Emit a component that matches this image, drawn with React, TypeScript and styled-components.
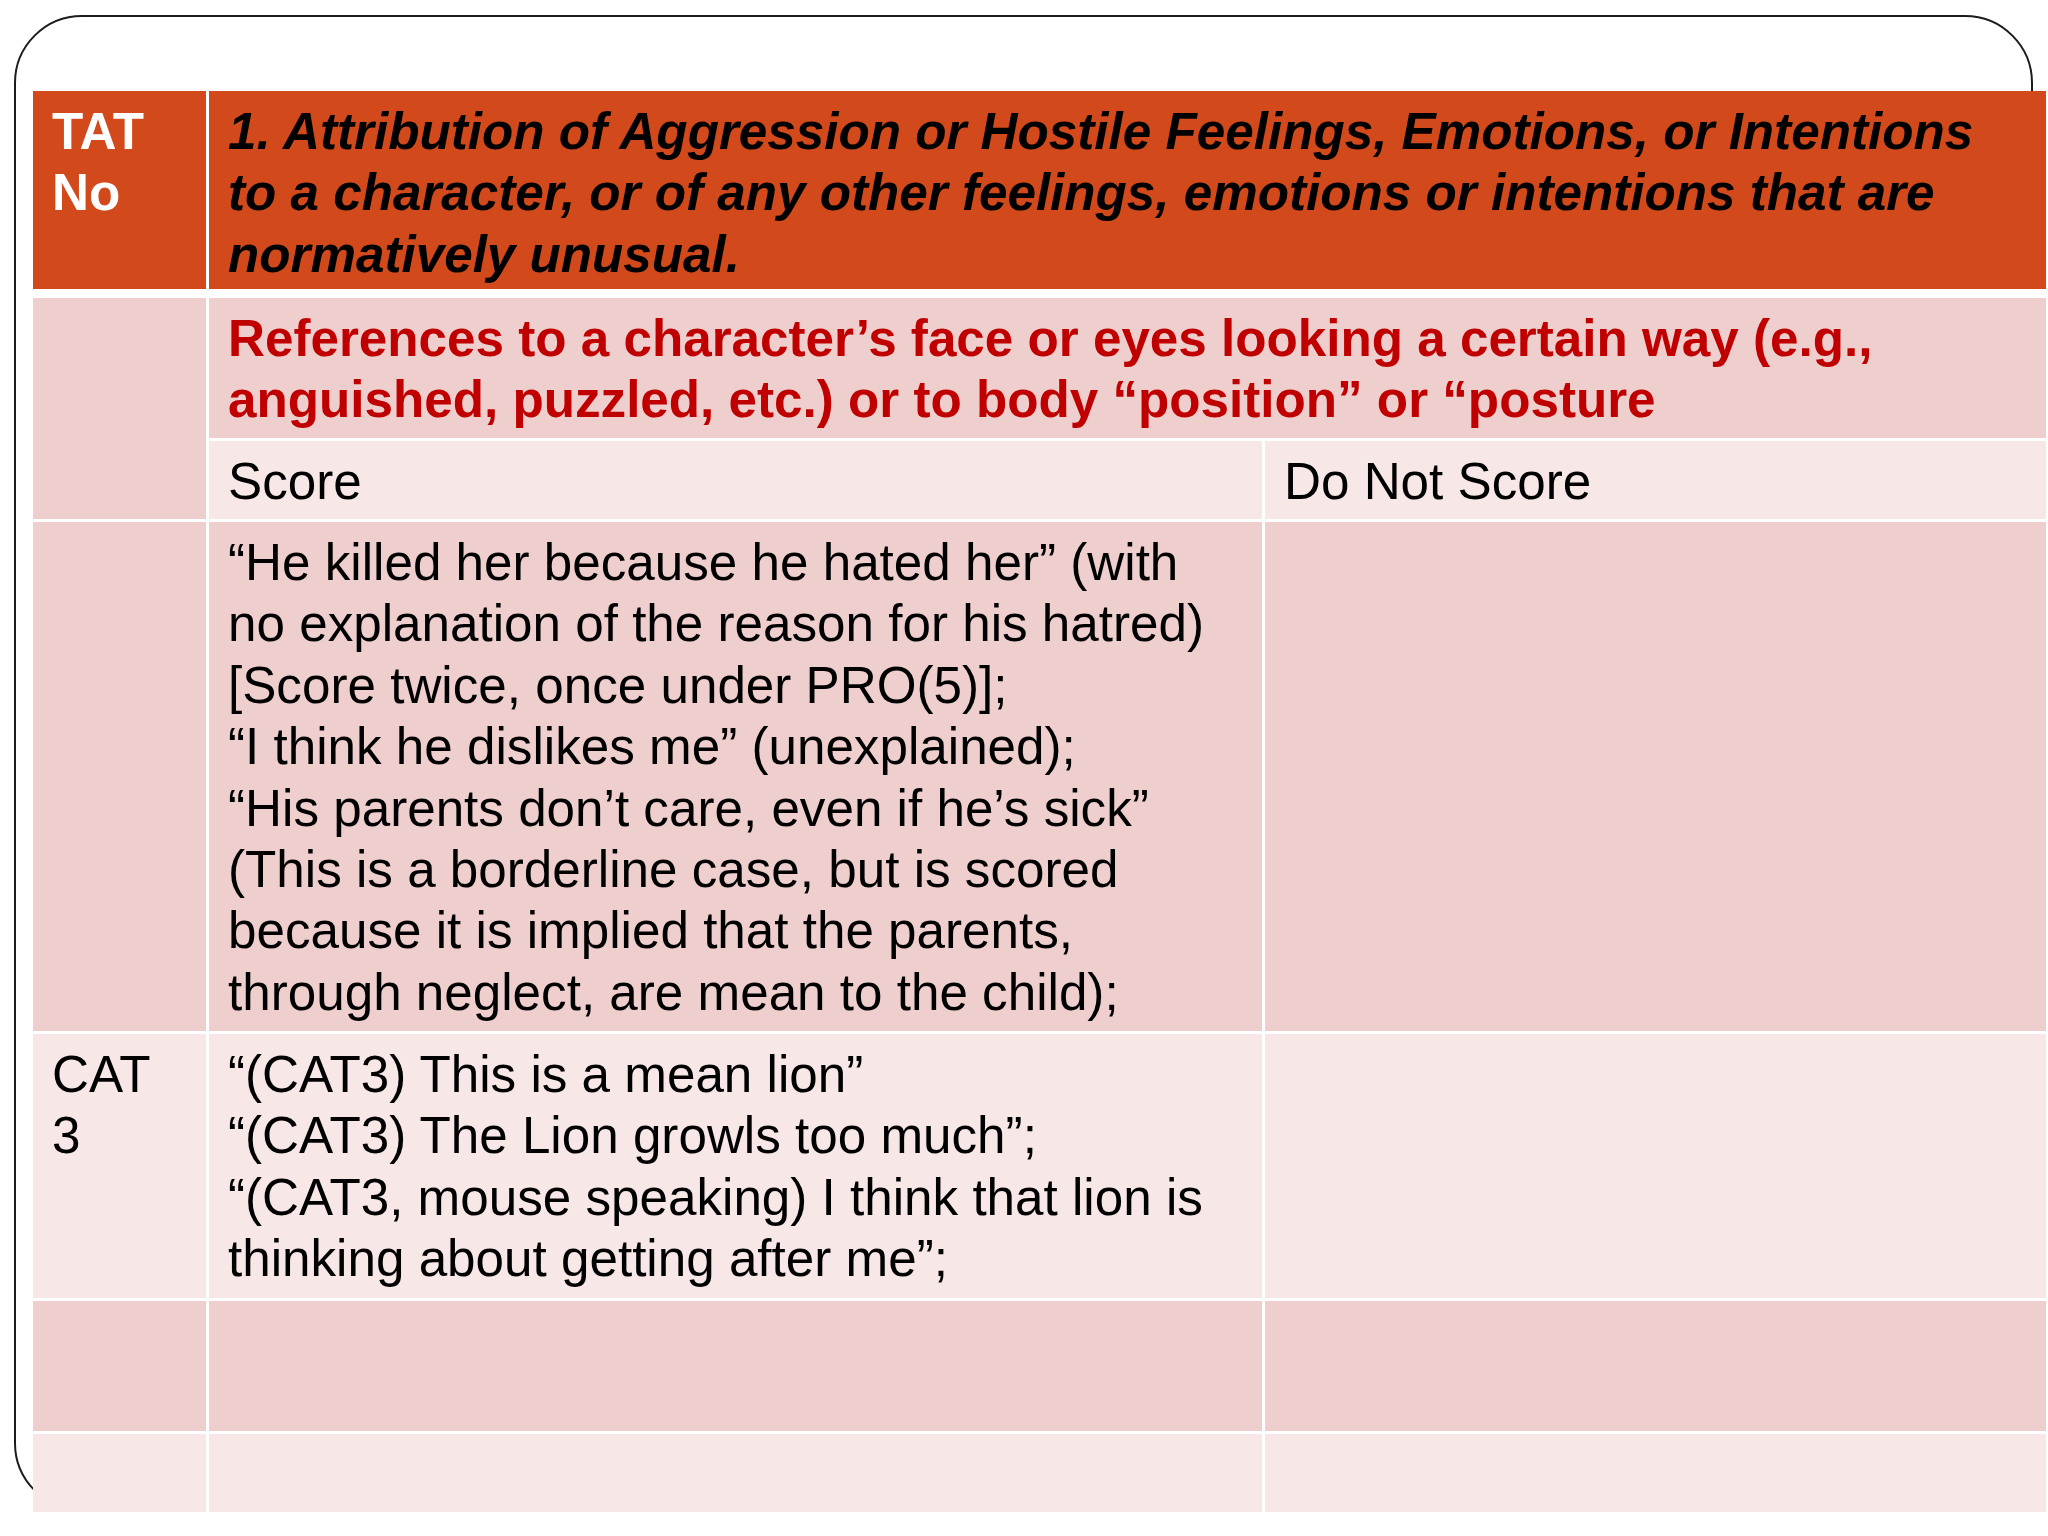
import React from "react";
import styled, { createGlobalStyle } from "styled-components";

const GlobalStyle = createGlobalStyle`
  html, body {
    margin: 0;
    padding: 0;
    background: #ffffff;
  }
  body {
    font-family: "Liberation Sans", Arial, sans-serif;
  }
`;

const Slide = styled.div`
  width: 2048px;
  height: 1536px;
  overflow: hidden;
  display: grid;
  grid-template-columns: 1fr;
  grid-template-rows: 1fr;
  background: #ffffff;
`;

const Frame = styled.div`
  grid-area: 1 / 1;
  align-self: start;
  justify-self: start;
  margin: 15px 0 0 14px;
  width: 2019px;
  height: 1496px;
  box-sizing: border-box;
  border: 2px solid #1c1c1c;
  border-radius: 68px;
`;

const Table = styled.div`
  grid-area: 1 / 1;
  align-self: start;
  justify-self: start;
  margin: 91px 0 0 33px;
  display: grid;
  grid-template-columns: 173px 1053px 781px;
  grid-template-rows: 198px 146px 78px 509px 264px 130px 78px;
  gap: 3px;
  background: #ffffff;
`;

type Tone = "head" | "dark" | "light";

const toneColor: Record<Tone, string> = {
  head: "#D24A1B",
  dark: "#EFCFCE",
  light: "#F7E8E7",
};

const Cell = styled.div<{
  $tone: Tone;
  $col: number;
  $span?: number;
  $row: number;
  $rowSpan?: number;
  $afterHead?: boolean;
}>`
  grid-column: ${(p) => p.$col} / span ${(p) => p.$span ?? 1};
  grid-row: ${(p) => p.$row} / span ${(p) => p.$rowSpan ?? 1};
  margin-top: ${(p) => (p.$afterHead ? "6px" : "0")};
  background: ${(p) => toneColor[p.$tone]};
  box-sizing: border-box;
  padding: 10px 19px 0 19px;
  font-size: 51.2px;
  line-height: 61.4px;
  white-space: nowrap;
  overflow: hidden;
`;

const HeadLabel = styled.div`
  color: #ffffff;
  font-weight: 700;
`;

const HeadTitle = styled.div`
  color: #000000;
  font-weight: 700;
  font-style: italic;
`;

const RedText = styled.div`
  color: #C00000;
  font-weight: 700;
`;

const BodyText = styled.div`
  color: #000000;
  font-weight: 400;
`;

export default function App() {
  return (
    <>
      <GlobalStyle />
      <Slide>
        <Frame />
        <Table>
          <Cell $tone="head" $col={1} $row={1}>
            <HeadLabel>
              TAT
              <br />
              No
            </HeadLabel>
          </Cell>
          <Cell $tone="head" $col={2} $span={2} $row={1}>
            <HeadTitle>
              1. Attribution of Aggression or Hostile Feelings, Emotions, or Intentions
              <br />
              to a character, or of any other feelings, emotions or intentions that are
              <br />
              normatively unusual.
            </HeadTitle>
          </Cell>

          <Cell $tone="dark" $col={1} $row={2} $rowSpan={2} $afterHead />
          <Cell $tone="dark" $col={2} $span={2} $row={2} $afterHead>
            <RedText>
              References to a character’s face or eyes looking a certain way (e.g.,
              <br />
              anguished, puzzled, etc.) or to body “position” or “posture
            </RedText>
          </Cell>

          <Cell $tone="light" $col={2} $row={3}>
            <BodyText>Score</BodyText>
          </Cell>
          <Cell $tone="light" $col={3} $row={3}>
            <BodyText>Do Not Score</BodyText>
          </Cell>

          <Cell $tone="dark" $col={1} $row={4} />
          <Cell $tone="dark" $col={2} $row={4}>
            <BodyText>
              “He killed her because he hated her” (with
              <br />
              no explanation of the reason for his hatred)
              <br />
              [Score twice, once under PRO(5)];
              <br />
              “I think he dislikes me” (unexplained);
              <br />
              “His parents don’t care, even if he’s sick”
              <br />
              (This is a borderline case, but is scored
              <br />
              because it is implied that the parents,
              <br />
              through neglect, are mean to the child);
            </BodyText>
          </Cell>
          <Cell $tone="dark" $col={3} $row={4} />

          <Cell $tone="light" $col={1} $row={5}>
            <BodyText>
              CAT
              <br />3
            </BodyText>
          </Cell>
          <Cell $tone="light" $col={2} $row={5}>
            <BodyText>
              “(CAT3) This is a mean lion”
              <br />
              “(CAT3) The Lion growls too much”;
              <br />
              “(CAT3, mouse speaking) I think that lion is
              <br />
              thinking about getting after me”;
            </BodyText>
          </Cell>
          <Cell $tone="light" $col={3} $row={5} />

          <Cell $tone="dark" $col={1} $row={6} />
          <Cell $tone="dark" $col={2} $row={6} />
          <Cell $tone="dark" $col={3} $row={6} />

          <Cell $tone="light" $col={1} $row={7} />
          <Cell $tone="light" $col={2} $row={7} />
          <Cell $tone="light" $col={3} $row={7} />
        </Table>
      </Slide>
    </>
  );
}
